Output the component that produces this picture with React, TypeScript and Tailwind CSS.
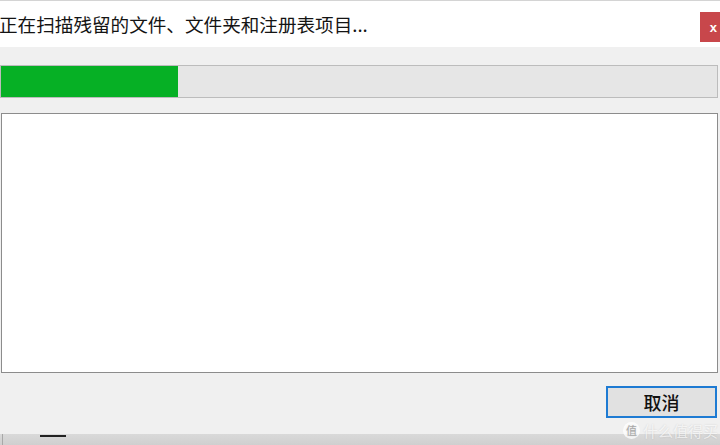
export default function App() {
  return (
    <div className="relative w-[720px] h-[445px] overflow-hidden flex flex-col bg-[#f0f0f0] font-['Microsoft_YaHei','Noto_Sans_CJK_SC',sans-serif]">
      {/* title strip */}
      <div className="h-[47px] bg-white border-t border-[#d4d4d4] flex items-start justify-between">
        <p className="mt-[11px] -ml-[1px] text-[18.6px] leading-[24px] text-[#141414] whitespace-nowrap">
          正在扫描残留的文件、文件夹和注册表项目...
        </p>
        <div className="mt-[11px] w-[20px] h-[30px] bg-[#c8474b] flex items-center justify-end pr-[3px]">
          <span className="text-white text-[13px] font-bold leading-none font-['Liberation_Sans',sans-serif]">x</span>
        </div>
      </div>

      {/* progress */}
      <div className="mt-[18px] w-[718px] h-[33px] border border-[#bcbcbc] bg-[#e6e6e6] flex">
        <div className="w-[177px] h-full bg-[#06b025]" />
      </div>

      {/* list */}
      <div className="mt-[15px] ml-[1px] w-[717px] h-[260px] bg-white border border-[#8c8c8c]" />

      {/* buttons */}
      <div className="h-[61px] flex justify-end items-start pt-[13px] pr-[3px]">
        <button className="w-[111px] h-[32px] bg-[#e1e1e1] border-2 border-[#1e7bd3] text-[18px] leading-none text-[#111] font-medium">
          取消
        </button>
      </div>

      {/* bottom band */}
      <div className="flex-1 bg-gradient-to-b from-[#d9d9d9] to-[#cfcfcf] relative">
        <div className="absolute left-[40px] top-[1px] w-[26px] h-[2px] bg-[#222]" />
        <div className="absolute left-[2px] top-0 w-[1px] h-full bg-[#a8a8a8]" />
      </div>

      {/* watermark */}
      <div className="absolute right-[2px] bottom-[6px] flex items-center gap-[3px] text-white/70 text-[15px] leading-none [text-shadow:0_0_2px_rgba(0,0,0,0.15)]">
        <span className="w-[17px] h-[17px] rounded-full bg-white/75 flex items-center justify-center text-[11px] text-[#a8a8a8]">值</span>
        <span>什么值得买</span>
      </div>
    </div>
  );
}
